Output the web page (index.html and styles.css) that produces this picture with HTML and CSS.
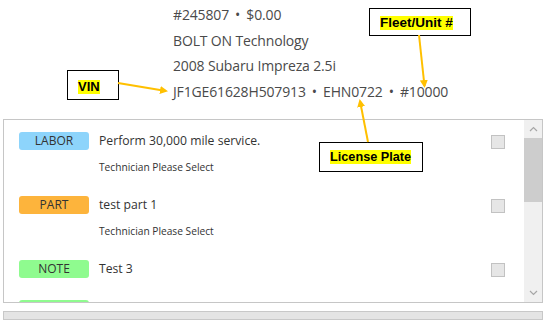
FILE: index.html
```html
<!DOCTYPE html>
<html>
<head>
<meta charset="utf-8">
<link rel="stylesheet" href="styles.css">
</head>
<body>
<div class="page">
  <div class="header">
    <div class="line meta">#245807 • $0.00</div>
    <div class="line">BOLT ON Technology</div>
    <div class="line">2008 Subaru Impreza 2.5i</div>
    <div class="line meta">JF1GE61628H507913 • EHN0722 • #10000</div>
  </div>

  <div class="panel">
    <div class="list">
      <div class="row">
        <span class="badge labor">LABOR</span>
        <div class="desc">
          <div class="title">Perform 30,000 mile service.</div>
          <div class="sub">Technician Please Select</div>
        </div>
        <span class="check"></span>
      </div>
      <div class="row">
        <span class="badge part">PART</span>
        <div class="desc">
          <div class="title">test part 1</div>
          <div class="sub">Technician Please Select</div>
        </div>
        <span class="check"></span>
      </div>
      <div class="row">
        <span class="badge note">NOTE</span>
        <div class="desc">
          <div class="title">Test 3</div>
        </div>
        <span class="check"></span>
      </div>
      <div class="row">
        <span class="badge note"></span>
        <div class="desc">
          <div class="title"></div>
        </div>
        <span class="check"></span>
      </div>
    </div>
    <div class="scrollbar">
      <div class="sb-btn">
        <svg width="9" height="6" viewBox="0 0 9 6"><path d="M1 5 L4.5 1.5 L8 5" fill="none" stroke="#a6a6a6" stroke-width="1.2"/></svg>
      </div>
      <div class="sb-thumb"></div>
      <div class="sb-track"></div>
      <div class="sb-btn">
        <svg width="9" height="6" viewBox="0 0 9 6"><path d="M1 1 L4.5 4.5 L8 1" fill="none" stroke="#a6a6a6" stroke-width="1.2"/></svg>
      </div>
    </div>
  </div>

  <div class="hbar"></div>

  <div class="callout fleet"><span class="hl">Fleet/Unit #</span></div>
  <div class="callout vin"><span class="hl">VIN</span></div>
  <div class="callout plate"><span class="hl">License Plate</span></div>

  <svg class="arrows" width="547" height="324" viewBox="0 0 547 324">
    <defs>
      <marker id="ah" markerWidth="8" markerHeight="8" refX="6" refY="4" orient="auto" markerUnits="userSpaceOnUse">
        <path d="M0 0 L8 4 L0 8 Z" fill="#ffc000"/>
      </marker>
    </defs>
    <line x1="419" y1="35" x2="424.5" y2="86" stroke="#ffc000" stroke-width="2" marker-end="url(#ah)"/>
    <line x1="118" y1="83" x2="166" y2="91" stroke="#ffc000" stroke-width="2" marker-end="url(#ah)"/>
    <line x1="368" y1="142" x2="360" y2="101" stroke="#ffc000" stroke-width="2" marker-end="url(#ah)"/>
  </svg>
</div>
</body>
</html>
```

FILE: styles.css
```css
* { box-sizing: border-box; }

html, body {
  margin: 0;
  padding: 0;
  background: #ffffff;
}

.page {
  position: relative;
  width: 547px;
  height: 324px;
  overflow: hidden;
  font-family: "Open Sans", "Noto Sans", sans-serif;
}

.header {
  padding: 2px 0 0 173px;
  height: 119px;
  color: #4a4a4a;
  font-size: 14px;
}

.line {
  line-height: 25.5px;
  white-space: nowrap;
  letter-spacing: -0.15px;
}

.meta {
  word-spacing: 2.6px;
}

.panel {
  margin-left: 3px;
  width: 540px;
  height: 184px;
  border: 1px solid #c6c6c6;
  display: flex;
}

.list {
  flex: 1;
  overflow: hidden;
  padding: 12px 0 0 15px;
}

.row {
  display: grid;
  grid-template-columns: 70px 1fr 14px;
  column-gap: 10px;
  padding-right: 19px;
  margin-bottom: 22px;
  align-items: start;
}

.badge {
  display: block;
  height: 18px;
  line-height: 18px;
  border-radius: 3px;
  text-align: center;
  font-size: 12px;
  color: #333333;
}

.labor { background: #8dd4fb; }
.part  { background: #fdb43c; }
.note  { background: #8ffb8f; }

.title {
  font-size: 12.2px;
  line-height: 18px;
  color: #333333;
  min-height: 18px;
}

.sub {
  margin-top: 10px;
  font-size: 10.2px;
  line-height: 14px;
  color: #333333;
}

.check {
  display: block;
  margin-top: 3px;
  width: 14px;
  height: 14px;
  background: #e6e6e6;
  border: 1px solid #c2c2c2;
}

.scrollbar {
  width: 18px;
  display: flex;
  flex-direction: column;
  background: #f0f0f0;
}

.sb-btn {
  height: 18px;
  display: flex;
  align-items: center;
  justify-content: center;
}

.sb-thumb {
  height: 64px;
  background: #cdcdcd;
}

.sb-track { flex: 1; }

.hbar {
  margin: 8px 0 0 3px;
  width: 540px;
  height: 9px;
  background: #e4e4e4;
  border: 1px solid #c8c8c8;
}

.callout {
  position: absolute;
  border: 1.5px solid #000000;
  background: #ffffff;
  font-family: "Liberation Sans", Arial, sans-serif;
  font-weight: bold;
  font-size: 13px;
  color: #000000;
}

.hl {
  background: #ffff00;
  line-height: 14px;
  display: inline-block;
}

.fleet {
  left: 369px;
  top: 8px;
  width: 102px;
  height: 28px;
  padding: 6px 0 0 10px;
  font-size: 13.5px;
}

.vin {
  left: 67px;
  top: 70px;
  width: 52px;
  height: 30px;
  padding: 8px 0 0 10px;
}

.plate {
  left: 319px;
  top: 142px;
  width: 104px;
  height: 30px;
  padding: 7px 0 0 10px;
  font-size: 12.7px;
}

.arrows {
  position: absolute;
  left: 0;
  top: 0;
  pointer-events: none;
}
```
